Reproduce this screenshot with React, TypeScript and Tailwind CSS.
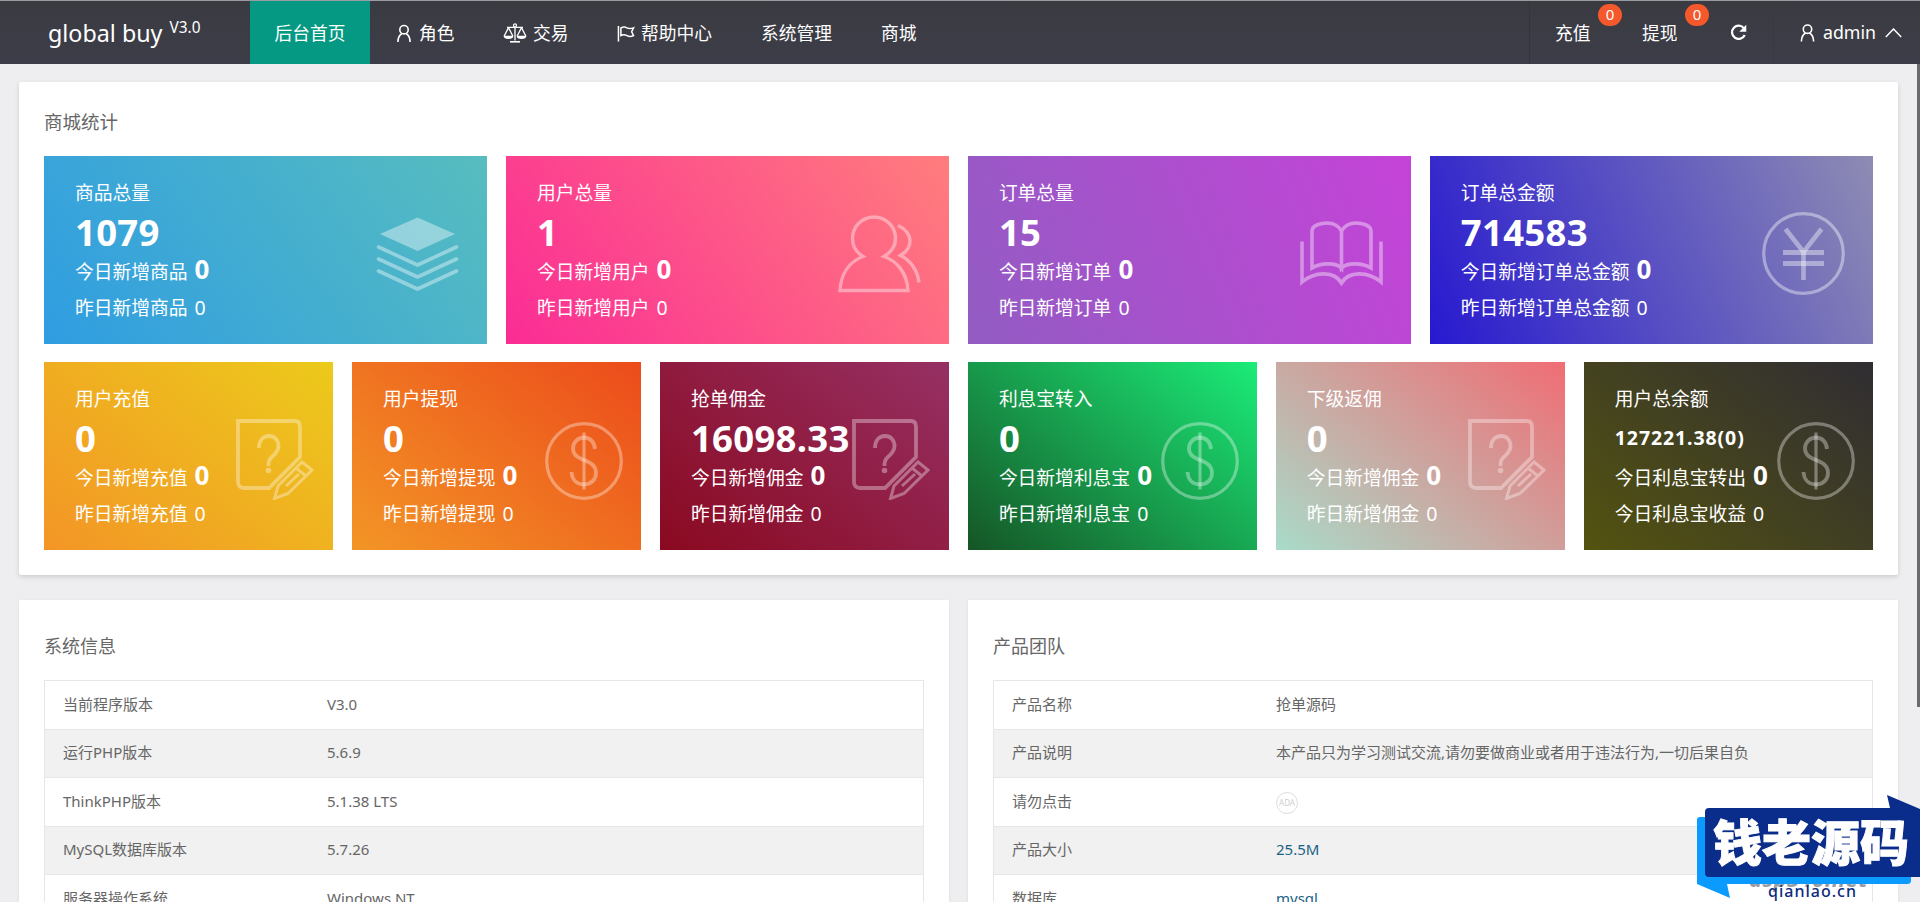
import React from "react";

type IconProps = { className?: string };

/* START: NAV ICONS */
function UserIcon({ className }: IconProps) {
    return (
        <svg className={className} viewBox="0 0 14 18" fill="none" stroke="currentColor" strokeWidth="1.6">
            <circle cx="7" cy="5.2" r="4.2" />
            <path d="M0.9 17.4C1 13 2.6 10.3 5 9M13.1 17.4C13 13 11.4 10.3 9 9" />
        </svg>
    )
}

function ScaleIcon({ className }: IconProps) {
    return (
        <svg className={className} viewBox="0 0 24 20" fill="none" stroke="currentColor" strokeWidth="1.3">
            <circle cx="12" cy="2.4" r="1.5" />
            <path d="M12 4v13.5M4 4.4h16M5.5 4.6L1.2 13M5.5 4.6L9.8 13M18.5 4.6L14.2 13M18.5 4.6L22.8 13" />
            <path d="M7 18.8h10" strokeWidth="1.6" />
            <path d="M0.6 12.8h9.8c0 2.200-2 3.200-4.900 3.200s-4.900-1-4.900-3.200zM13.600 12.800h9.800c0 2.200-2 3.200-4.900 3.200s-4.900-1-4.900-3.200z" fill="currentColor" stroke="none" />
        </svg>
    )
}

function FlagIcon({ className }: IconProps) {
    return (
        <svg className={className} viewBox="0 0 18 18" fill="none" stroke="currentColor" strokeWidth="1.6">
            <path d="M1 1v16.5M3.6 3.2C6 1.8 8 2 10 3s4.500 1 7 0l-2 4.200 2 4c-2.500 1.200-5 1-7 0s-4-1.200-6.400 0z" />
        </svg>
    )
}

function RefreshIcon({ className }: IconProps) {
    return (
        <svg className={className} viewBox="0 0 18 18" fill="none" stroke="currentColor" strokeWidth="2.400">
            <path d="M14.800 4.600A7 7 0 1 0 15.600 11.600" />
            <path d="M17.200 0.800v7.400H9.800z" fill="currentColor" stroke="none" />
        </svg>
    )
}
/* END: NAV ICONS */

/* START: CARD ICONS */
function LayersIcon() {
    return (
        <svg className="h-[76px] w-[83px]" viewBox="0 0 83 76" fill="none" stroke="currentColor" strokeWidth="3.600" strokeLinecap="round" strokeLinejoin="round">
            <path d="M41.500 1.500L79 18 41.500 35 4 18z" fill="currentColor" stroke="none" />
            <path d="M2.500 31L41.500 49 80.500 31M2.500 43L41.500 61 80.500 43M2.500 55L41.500 73 80.500 55" />
        </svg>
    )
}

function UsersIcon() {
    return (
        <svg className="h-[78px] w-[83px]" viewBox="0 0 83 78" fill="none" stroke="currentColor" strokeWidth="3.400">
            <path d="M25 41.500C17.500 37 14.500 30.500 14.500 23.500a21.500 21.500 0 0 1 43 0c0 7-4 13.500-11.500 18C59 46 69 58 70 75.500h-68C3 58 12 46.500 25 41.500z" />
            <path d="M60 10.500c7 3 12 9 12 15.500 0 6-3.500 11-9.500 14.500C72 45 79.500 55 81 67.500" />
        </svg>
    )
}

function BookIcon() {
    return (
        <svg className="h-[66px] w-[83px]" viewBox="0 0 83 66" fill="none" stroke="currentColor" strokeWidth="3.600">
            <path d="M41.500 47V10C38 4 32.500 2 27 2S12 4 12 10v37c8-5 24-6 29.500 0zM41.500 47V10C45 4 50.500 2 56 2s15 2 15 8v37c-8-5-24-6-29.500 0z" />
            <path d="M2 20.500V61c13-11 32.500-11 39.500 1 7-12 26.500-12 39.500-1V20.500" />
        </svg>
    )
}

function YenIcon() {
    return (
        <svg className="h-[83px] w-[83px]" viewBox="0 0 83 83" fill="none" stroke="currentColor" strokeWidth="3.200">
            <circle cx="41.500" cy="41.500" r="39.800" />
            <path d="M23.500 17l18 23 18-23M41.500 40v28" strokeWidth="4.600" />
            <path d="M21 40.500h41M21 51.500h41" strokeWidth="5" />
        </svg>
    )
}

function QuestionIcon() {
    return (
        <svg className="-mt-[4px] mr-[1px] h-[81px] w-[78px]" viewBox="0 0 78 81" fill="none" stroke="currentColor" strokeWidth="3.800">
            <path d="M33 69H8q-6 0-6-6V2h57q5 0 5 6v30L33 69z" />
            <path d="M23 29c0-8 4.500-12 10-12s9.500 4 9.500 10c0 5-2.500 7-5.500 10-3 2.500-4.500 5-4.500 8v2" />
            <circle cx="32.500" cy="51.500" r="2.800" fill="currentColor" stroke="none" />
            <path d="M66 43l10 8-24 23.500-13.500 5 3.500-12.500zM60 49l10 8M63 55L50 67" strokeWidth="3" />
        </svg>
    )
}

function DollarIcon() {
    return (
        <svg className="h-[78px] w-[78px]" viewBox="0 0 78 78" fill="none" stroke="currentColor" strokeWidth="3.200">
            <circle cx="39" cy="39" r="37.300" />
            <path d="M39 10.500v57" />
            <path d="M50 27c-.5-7-5-11.500-11-11.500S28 20 28 26.500c0 14 23 9 23 24.500 0 6.500-5 11.500-12 11.500S27 58 26.500 50" strokeWidth="3.800" />
        </svg>
    )
}
/* END: CARD ICONS */

type CardProps = {
    title: string;
    value: string;
    today: string;
    yesterday: string;
    bg: string;
    iconClass: string;
    icon: React.ReactNode;
    small?: boolean;
};

function StatCard({ title, value, today, yesterday, bg, iconClass, icon, small }: CardProps) {
    return (
        <div className={`flex h-[188px] items-center pl-[31px] text-[18.75px] whitespace-nowrap text-white ${bg}`}>
            <div className="mb-[4px] flex w-0 grow flex-col">
                <div className="h-[38px] leading-[38px]">{title}</div>
                <div className={small ? "h-10 text-[19.5px] leading-10 font-bold tracking-[0.9px]" : "h-10 text-[36.5px] leading-10 font-bold tracking-[0.3px]"}>{value}</div>
                <div className="h-[41px] leading-[35px]">{today}<span className="ml-[7px] text-[26px] font-bold">0</span></div>
                <div className="h-[30px] leading-[30px]">{yesterday}<span className="ml-[7px] text-[19.5px]">0</span></div>
            </div>
            <div className={iconClass}>{icon}</div>
        </div>
    )
}

const MAIN_ICON = "mt-[7px] mr-[28px] shrink-0 text-white/40";
const SUB_ICON = "mt-[10px] mr-[18px] shrink-0 text-white/35";

const mainCards: CardProps[] = [
    { title: "商品总量", value: "1079", today: "今日新增商品", yesterday: "昨日新增商品", bg: "bg-[linear-gradient(-125deg,#57bdbf,#2f9de2)]", iconClass: MAIN_ICON, icon: <LayersIcon /> },
    { title: "用户总量", value: "1", today: "今日新增用户", yesterday: "昨日新增用户", bg: "bg-[linear-gradient(-125deg,#ff7d7d,#fb2c95)]", iconClass: MAIN_ICON, icon: <UsersIcon /> },
    { title: "订单总量", value: "15", today: "今日新增订单", yesterday: "昨日新增订单", bg: "bg-[linear-gradient(-113deg,#c543d8,#925cc3)]", iconClass: MAIN_ICON, icon: <BookIcon /> },
    { title: "订单总金额", value: "714583", today: "今日新增订单总金额", yesterday: "昨日新增订单总金额", bg: "bg-[linear-gradient(-113deg,#8e8cb3,#2719d0)]", iconClass: MAIN_ICON, icon: <YenIcon /> },
];

const subCards: CardProps[] = [
    { title: "用户充值", value: "0", today: "今日新增充值", yesterday: "昨日新增充值", bg: "bg-[linear-gradient(-141deg,#ecca1b,#f39526)]", iconClass: SUB_ICON, icon: <QuestionIcon /> },
    { title: "用户提现", value: "0", today: "今日新增提现", yesterday: "昨日新增提现", bg: "bg-[linear-gradient(-141deg,#ec4b1b,#f39526)]", iconClass: SUB_ICON, icon: <DollarIcon /> },
    { title: "抢单佣金", value: "16098.33", today: "今日新增佣金", yesterday: "昨日新增佣金", bg: "bg-[linear-gradient(-141deg,#963064,#8a0920)]", iconClass: SUB_ICON, icon: <QuestionIcon /> },
    { title: "利息宝转入", value: "0", today: "今日新增利息宝", yesterday: "昨日新增利息宝", bg: "bg-[linear-gradient(-141deg,#1bec78,#155526)]", iconClass: SUB_ICON, icon: <DollarIcon /> },
    { title: "下级返佣", value: "0", today: "今日新增佣金", yesterday: "昨日新增佣金", bg: "bg-[linear-gradient(-141deg,#f06d74,#a9dbc9)]", iconClass: SUB_ICON, icon: <QuestionIcon /> },
    { title: "用户总余额", value: "127221.38(0)", today: "今日利息宝转出", yesterday: "今日利息宝收益", bg: "bg-[linear-gradient(-141deg,#302d33,#535310)]", iconClass: SUB_ICON, icon: <DollarIcon />, small: true },
];

const systemRows: [string, React.ReactNode][] = [
    ["当前程序版本", "V3.0"],
    ["运行PHP版本", "5.6.9"],
    ["ThinkPHP版本", "5.1.38 LTS"],
    ["MySQL数据库版本", "5.7.26"],
    ["服务器操作系统", "Windows NT"],
];

const productRows: [string, React.ReactNode][] = [
    ["产品名称", "抢单源码"],
    ["产品说明", "本产品只为学习测试交流,请勿要做商业或者用于违法行为,一切后果自负"],
    ["请勿点击", <span className="mt-[5px] flex h-[22px] w-[22px] items-center justify-center rounded-full border border-[#dedede] text-[8px] text-[#cfcfcf]">ADA</span>],
    ["产品大小", <a className="text-[#1b6385]">25.5M</a>],
    ["数据库", <a className="text-[#1b6385]">mysql</a>],
];

function InfoPanel({ title, rows }: { title: string; rows: [string, React.ReactNode][] }) {
    return (
        <div className="h-[400px] w-[930px] bg-white px-[25px] pt-[31px] shadow-[0_1px_3px_rgba(0,0,0,0.08)]">
            <div className="h-[49px] text-[18px] leading-[30px] text-[#666]">{title}</div>
            <div className="border border-[#e6e6e6] text-[15px] text-[#666]">
                {rows.map(([label, value], i) => (
                    <div key={label} className={i % 2 ? "flex h-[48.5px] items-center border-b border-[#e6e6e6] bg-[#f1f1f1] pb-[2px]" : "flex h-[48.5px] items-center border-b border-[#e6e6e6] pb-[2px]"}>
                        <div className="w-[282px] pl-[18px]">{label}</div>
                        <div>{value}</div>
                    </div>
                ))}
            </div>
        </div>
    )
}

function Watermark() {
    return (
        <div className="absolute right-0 bottom-0 h-[108px] w-[224px] overflow-hidden">
            <div className="absolute top-[73px] left-[53px] text-[22px] leading-[22px] font-bold tracking-[0.5px] text-[#9a9ca3] italic">asp340.net</div>
            <svg className="absolute top-0 left-0 h-[108px] w-[224px]" viewBox="0 0 224 108">
                <path d="M4 23h207q4 0 4 4v60q0 3-4 3H31l3 14L1 90V26q0-3 3-3z" fill="#0b9bff" />
                <path d="M13 14h181l-3-13 33 14v68H13q-4 0-4-4V18q0-4 4-4z" fill="#0a2c8a" />
            </svg>
            <div className="absolute top-[24px] left-[17px] text-[49px] leading-[49px] font-black whitespace-nowrap text-white [-webkit-text-stroke:1px_white]">钱老源码</div>
            <div className="absolute top-[87px] left-[72px] text-[16px] leading-[20px] font-medium tracking-[1px] text-[#0d2c80]">qianlao.cn</div>
        </div>
    )
}

export default function App() {
    return (
        <div className="relative h-[902px] w-[1920px] overflow-hidden bg-[#eeeef0] font-['Noto_Sans','Noto_Sans_CJK_SC',sans-serif]">
            {/* START: HEADER */}
            <header className="flex h-16 items-center border-t border-[#9a9ba3] bg-linear-to-b from-[#3a3b41] to-[#3d3d49] text-[17.75px] text-white">
                <div className="flex w-[250px] pl-[48px] text-[23.3px] leading-[28px]">
                    global buy<span className="ml-[7px] text-[15.4px] leading-[18px]">V3.0</span>
                </div>
                <nav className="flex h-full items-center">
                    <a className="flex h-full w-[120px] items-center justify-center bg-[#059883] pt-px">后台首页</a>
                    <a className="flex w-[110px] items-center pt-px pl-[27px]"><UserIcon className="mr-[8px] h-[19px] w-[14px]" />角色</a>
                    <a className="flex w-[112px] items-center pt-px pl-[23px]"><ScaleIcon className="mr-[6px] h-[20px] w-[24px]" />交易</a>
                    <a className="flex w-[144px] items-center pt-px pl-[25px]"><FlagIcon className="mr-[6px] h-[17px] w-[18px]" />帮助中心</a>
                    <a className="w-[120px] pt-px pl-[25px]">系统管理</a>
                    <a className="pt-px pl-[25px]">商城</a>
                </nav>
                <div className="ml-auto flex h-full w-[391px] items-center border-l border-[#34353d]">
                    <a className="relative w-[87px] pt-px pl-[25px]">
                        充值
                        <span className="absolute -top-[15px] left-[68px] flex h-[22px] w-[24px] items-center justify-center rounded-full bg-[#f4582b] text-[15px]">0</span>
                    </a>
                    <a className="relative w-[87px] pt-px pl-[25px]">
                        提现
                        <span className="absolute -top-[15px] left-[68px] flex h-[22px] w-[24px] items-center justify-center rounded-full bg-[#f4582b] text-[15px]">0</span>
                    </a>
                    <a className="flex h-full w-[70px] items-center border-r border-[#383942] pl-[26px]"><RefreshIcon className="h-[17px] w-[17px]" /></a>
                    <a className="flex items-center pl-[26px]">
                        <UserIcon className="mr-[8px] h-[18px] w-[15px]" />admin
                        <svg className="ml-[9px] h-[10px] w-[17px]" viewBox="0 0 17 10" fill="none" stroke="currentColor" strokeWidth="1.5"><path d="M0.800 9L8.500 1l7.700 8" /></svg>
                    </a>
                </div>
            </header>
            {/* END: HEADER */}

            {/* START: MALL STATISTICS */}
            <section className="mt-[18px] ml-[19px] h-[493px] w-[1879px] rounded-[2px] bg-white px-[25px] pt-[25px] shadow-[0_2px_5px_rgba(0,0,0,0.14)]">
                <div className="h-[49px] text-[18.5px] leading-[30px] text-[#666]">商城统计</div>
                <div className="grid grid-cols-4 gap-[18.75px]">
                    {mainCards.map((card) => <StatCard key={card.title} {...card} />)}
                </div>
                <div className="mt-[18px] grid grid-cols-6 gap-[18.75px]">
                    {subCards.map((card) => <StatCard key={card.title} {...card} />)}
                </div>
            </section>
            {/* END: MALL STATISTICS */}

            {/* START: INFO TABLES */}
            <section className="mt-[25px] ml-[19px] flex gap-[19px]">
                <InfoPanel title="系统信息" rows={systemRows} />
                <InfoPanel title="产品团队" rows={productRows} />
            </section>
            {/* END: INFO TABLES */}

            {/* SCROLLBAR */}
            <div className="absolute top-16 right-0 h-[643px] w-[3px] bg-[#6b6b6b]" />
            <Watermark />
        </div>
    )
}
